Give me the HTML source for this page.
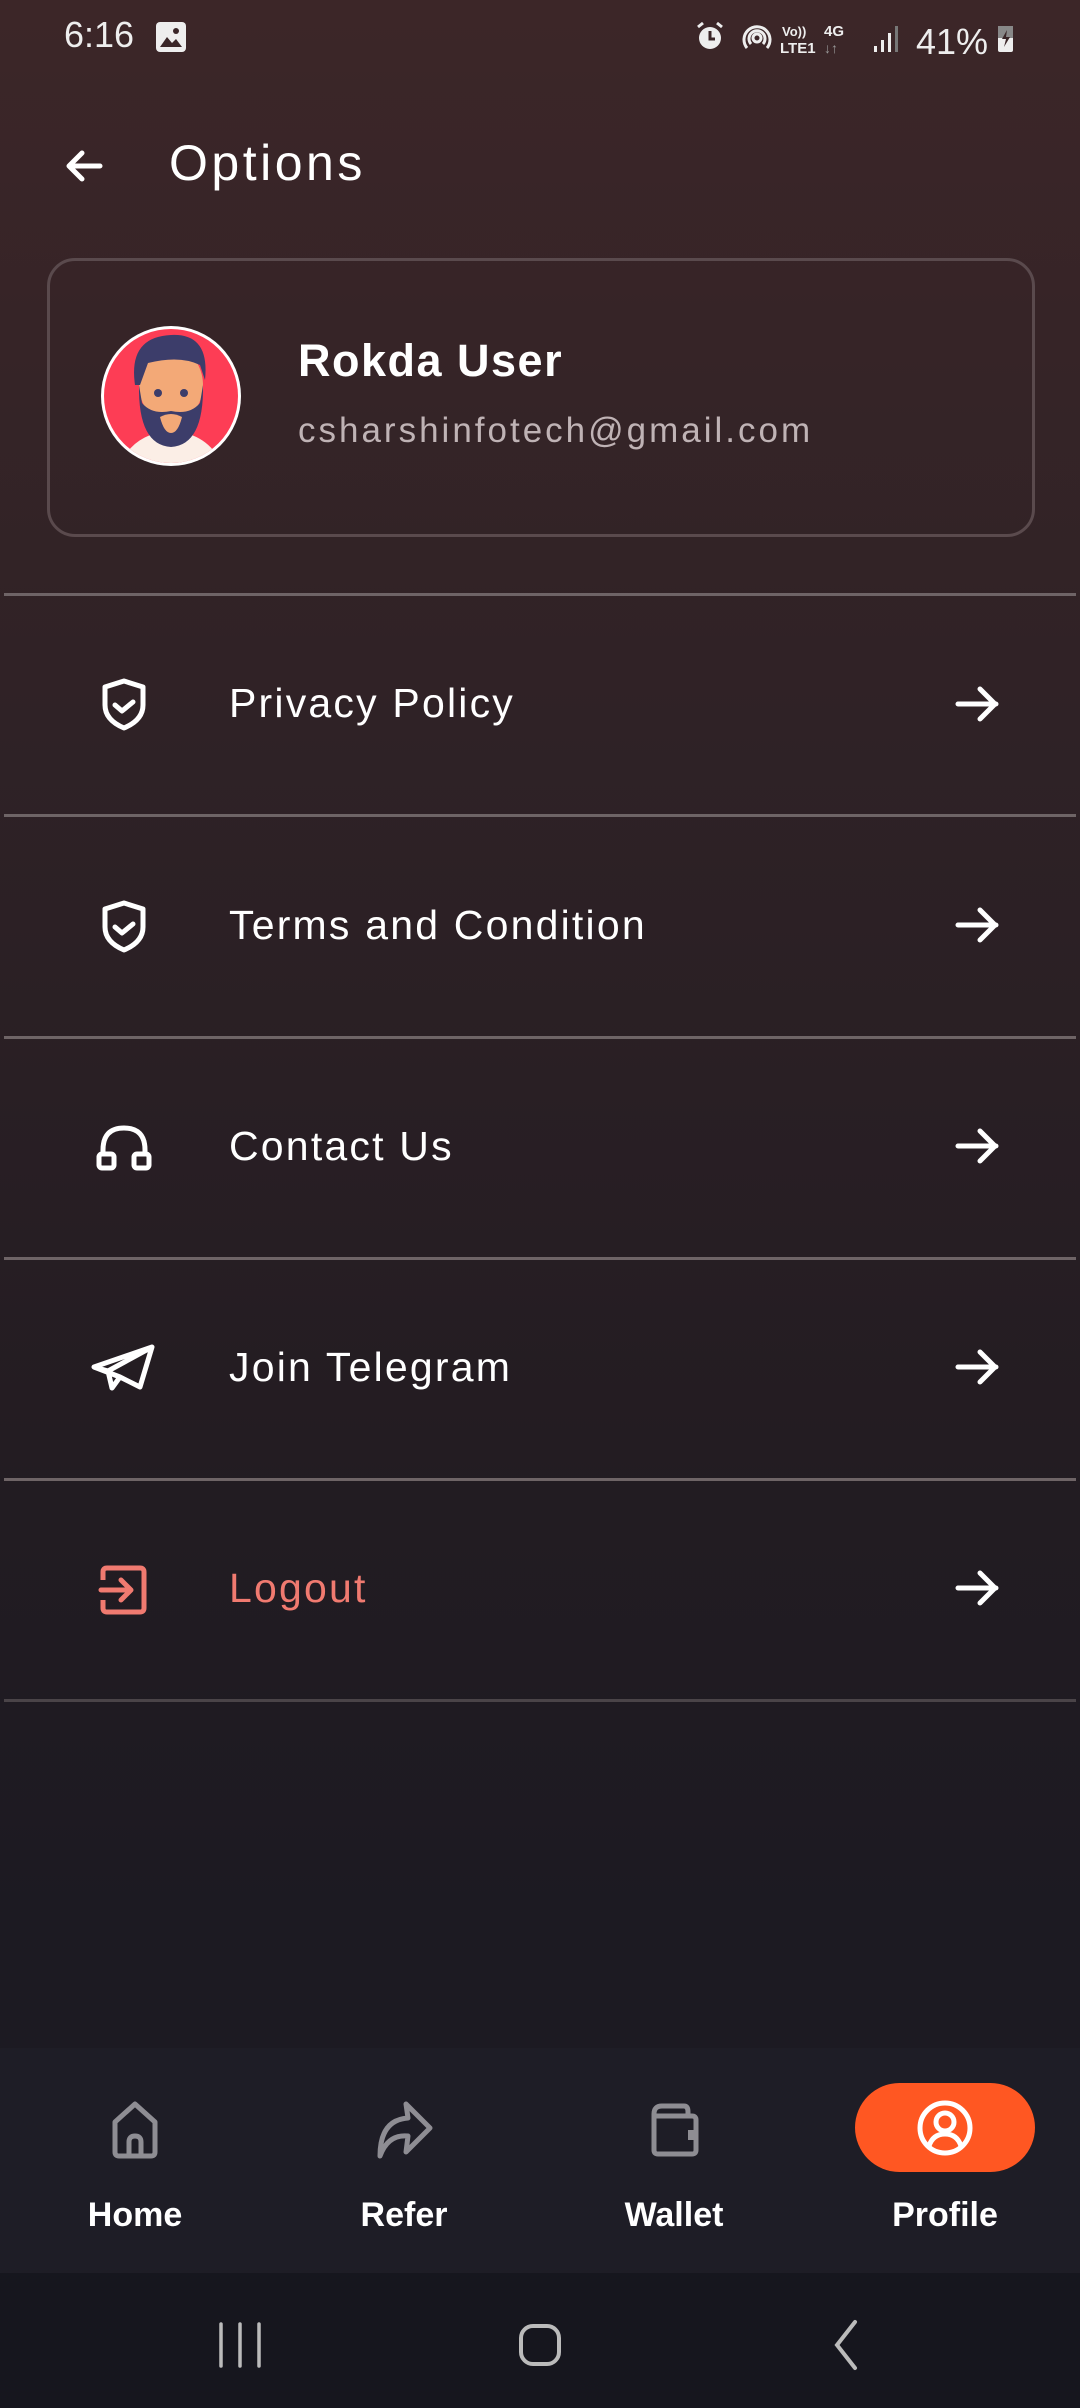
<!DOCTYPE html>
<html><head><meta charset="utf-8"><style>
*{margin:0;padding:0;box-sizing:border-box}
body{width:1080px;height:2408px;overflow:hidden;font-family:"Liberation Sans",sans-serif;color:#fff;position:relative;
background:linear-gradient(180deg,#3c2628 0%,#2f2226 30%,#231c22 60%,#1c1a22 80%,#1a1822 100%);}
.abs{position:absolute}
.div{position:absolute;left:4px;width:1072px;height:3px;background:#6e6466}
.row{position:absolute;left:0;width:1080px;height:100px}
.row .t{position:absolute;left:229px;top:28px;font-size:41px;line-height:44px;letter-spacing:2.2px}
.row svg{position:absolute}
</style></head><body>
<!-- status bar -->
<div class="abs" style="left:64px;top:14px;font-size:36px;color:#eee">6:16</div>
<svg class="abs" style="left:154px;top:20px" width="34" height="34" viewBox="0 0 34 34"><rect x="2" y="2" width="30" height="30" rx="4" fill="#eee"/><path d="M6 27 L13 17 L18 23 L22 19 L28 27Z" fill="#3a2628"/><circle cx="22" cy="11" r="3" fill="#3a2628"/></svg>
<svg class="abs" style="left:694px;top:20px" width="330" height="40" viewBox="0 0 330 40">
<circle cx="16" cy="18" r="11" fill="#eee"/><path d="M16 11v8h5" stroke="#3a2628" stroke-width="3" fill="none"/><path d="M4 7l5-4M28 7l-5-4" stroke="#eee" stroke-width="3"/>
<circle cx="63" cy="18" r="4" fill="none" stroke="#eee" stroke-width="3"/><path d="M53 28a13 13 0 1 1 20 0M57 24a8 8 0 1 1 12 0" stroke="#eee" stroke-width="3" fill="none"/>
<text x="88" y="16" font-size="13" fill="#eee" font-family="Liberation Sans" font-weight="bold">Vo))</text>
<text x="86" y="33" font-size="15" fill="#eee" font-family="Liberation Sans" font-weight="bold">LTE1</text>
<text x="130" y="16" font-size="15" fill="#eee" font-family="Liberation Sans" font-weight="bold">4G</text>
<text x="130" y="33" font-size="14" fill="#999" font-family="Liberation Sans">↓↑</text>
<rect x="180" y="26" width="3" height="6" fill="#eee"/><rect x="187" y="20" width="3" height="12" fill="#eee"/><rect x="194" y="13" width="3" height="19" fill="#eee"/><rect x="201" y="6" width="3" height="26" fill="#777"/>
<text x="222" y="34" font-size="36" fill="#eee" font-family="Liberation Sans">41%</text>
<rect x="304" y="6" width="15" height="26" rx="2" fill="#eee"/><rect x="304" y="6" width="15" height="12" fill="#888"/><path d="M313 10l-5 9h4l-2 8 6-10h-4z" fill="#3a2628"/>
</svg>
<!-- header -->
<svg class="abs" style="left:64px;top:148px" width="40" height="36" viewBox="0 0 40 36"><path d="M36 18H6M18 5L5 18l13 13" stroke="#fff" stroke-width="5" fill="none" stroke-linecap="round" stroke-linejoin="round"/></svg>
<div class="abs" style="left:169px;top:134px;font-size:50px;letter-spacing:3.5px">Options</div>
<!-- card -->
<div class="abs" style="left:47px;top:258px;width:988px;height:279px;border:3px solid #5a4a4d;border-radius:28px"></div>
<svg class="abs" style="left:100px;top:325px" width="142" height="142" viewBox="0 0 142 142">
<defs><clipPath id="c"><circle cx="71" cy="71" r="67"/></clipPath></defs>
<circle cx="71" cy="71" r="70" fill="#fff"/>
<g clip-path="url(#c)"><rect width="142" height="142" fill="#fd3d55"/>
<path d="M20 142 Q30 110 71 105 Q112 110 122 142Z" fill="#fbeee6"/>
<rect x="55" y="85" width="32" height="30" fill="#eaa070"/>
<ellipse cx="71" cy="60" rx="32" ry="38" fill="#f3a977"/>
<path d="M39 60 Q38 120 71 122 Q104 120 103 60 L100 78 Q90 90 71 86 Q52 90 42 78Z" fill="#3c3d6a"/>
<path d="M60 92 Q71 86 82 92 Q78 108 71 108 Q64 108 60 92Z" fill="#f3a977"/>
<path d="M35 60 Q28 12 71 10 Q110 8 105 55 L100 40 Q80 30 48 38 L40 60Z" fill="#3c3d6a"/>
<circle cx="58" cy="68" r="4" fill="#3c3d6a"/><circle cx="84" cy="68" r="4" fill="#3c3d6a"/>
</g></svg>
<div class="abs" style="left:298px;top:335px;font-size:45px;font-weight:bold;letter-spacing:1.5px">Rokda User</div>
<div class="abs" style="left:298px;top:411px;font-size:35px;color:#bfb3b5;letter-spacing:3px">csharshinfotech@gmail.com</div>
<!-- dividers -->
<div class="div" style="top:593px"></div>
<div class="div" style="top:814px"></div>
<div class="div" style="top:1036px"></div>
<div class="div" style="top:1257px"></div>
<div class="div" style="top:1478px"></div>
<div class="div" style="top:1699px;background:#4a4448"></div>
<!-- rows -->
<div class="row" style="top:653px">
<svg style="left:98px;top:24px" width="52" height="56" viewBox="0 0 52 56"><path d="M26 4 L45 10 V28 Q45 43 26 51 Q7 43 7 28 V10Z" stroke="#fff" stroke-width="5" fill="none" stroke-linejoin="round"/><path d="M17 28l7 6 11-9" stroke="#fff" stroke-width="5" fill="none" stroke-linecap="round" stroke-linejoin="round"/></svg>
<div class="t">Privacy Policy</div></div>
<div class="row" style="top:875px">
<svg style="left:98px;top:24px" width="52" height="56" viewBox="0 0 52 56"><path d="M26 4 L45 10 V28 Q45 43 26 51 Q7 43 7 28 V10Z" stroke="#fff" stroke-width="5" fill="none" stroke-linejoin="round"/><path d="M17 28l7 6 11-9" stroke="#fff" stroke-width="5" fill="none" stroke-linecap="round" stroke-linejoin="round"/></svg>
<div class="t">Terms and Condition</div></div>
<div class="row" style="top:1096px">
<svg style="left:94px;top:26px" width="60" height="52" viewBox="0 0 60 52"><path d="M9 34 V28 Q9 6 30 6 Q51 6 51 28 V34" stroke="#fff" stroke-width="5" fill="none"/><rect x="5" y="32" width="15" height="14" rx="3" stroke="#fff" stroke-width="5" fill="none"/><rect x="40" y="32" width="15" height="14" rx="3" stroke="#fff" stroke-width="5" fill="none"/></svg>
<div class="t">Contact Us</div></div>
<div class="row" style="top:1317px">
<svg style="left:90px;top:26px" width="68" height="52" viewBox="0 0 68 52"><path d="M4 24 L62 4 L50 44 L30 34Z M30 34 L22 45 L18 28 M18 28 L62 4" stroke="#fff" stroke-width="5" fill="none" stroke-linejoin="round" stroke-linecap="round"/><path d="M4 24 L18 28" stroke="#fff" stroke-width="5"/></svg>
<div class="t">Join Telegram</div></div>
<div class="row" style="top:1538px">
<svg style="left:98px;top:24px" width="52" height="56" viewBox="0 0 52 56"><path d="M5 18 V10 Q5 6 9 6 H42 Q46 6 46 10 V46 Q46 50 42 50 H9 Q5 50 5 46 V38" stroke="#f07a70" stroke-width="5" fill="none"/><path d="M3 28 H33 M23 18 L33 28 L23 38" stroke="#f07a70" stroke-width="5" fill="none" stroke-linecap="round" stroke-linejoin="round"/></svg>
<div class="t" style="color:#f07a70">Logout</div></div>
<!-- arrows -->
<svg class="abs" style="left:952px;top:682px" width="52" height="44" viewBox="0 0 52 44"><path d="M6 22H44M28 7l15 15-15 15" stroke="#fff" stroke-width="5" fill="none" stroke-linecap="round" stroke-linejoin="round"/></svg>
<svg class="abs" style="left:952px;top:903px" width="52" height="44" viewBox="0 0 52 44"><path d="M6 22H44M28 7l15 15-15 15" stroke="#fff" stroke-width="5" fill="none" stroke-linecap="round" stroke-linejoin="round"/></svg>
<svg class="abs" style="left:952px;top:1124px" width="52" height="44" viewBox="0 0 52 44"><path d="M6 22H44M28 7l15 15-15 15" stroke="#fff" stroke-width="5" fill="none" stroke-linecap="round" stroke-linejoin="round"/></svg>
<svg class="abs" style="left:952px;top:1345px" width="52" height="44" viewBox="0 0 52 44"><path d="M6 22H44M28 7l15 15-15 15" stroke="#fff" stroke-width="5" fill="none" stroke-linecap="round" stroke-linejoin="round"/></svg>
<svg class="abs" style="left:952px;top:1566px" width="52" height="44" viewBox="0 0 52 44"><path d="M6 22H44M28 7l15 15-15 15" stroke="#fff" stroke-width="5" fill="none" stroke-linecap="round" stroke-linejoin="round"/></svg>
<!-- bottom nav -->
<div class="abs" style="left:0;top:2048px;width:1080px;height:225px;background:#1e1d26"></div>
<div class="abs" style="left:0;top:2273px;width:1080px;height:135px;background:#16161e"></div>
<svg class="abs" style="left:105px;top:2100px" width="60" height="60" viewBox="0 0 60 60"><path d="M10 52 V22 L30 4 L50 22 V52 Q50 56 46 56 H14 Q10 56 10 52Z M24 56 V42 Q24 36 30 36 Q36 36 36 42 V56" stroke="#8e8d93" stroke-width="5" fill="none" stroke-linejoin="round"/></svg>
<svg class="abs" style="left:374px;top:2100px" width="60" height="60" viewBox="0 0 60 60"><path d="M32 4 L56 28 L32 52 L34 36 Q14 34 6 56 Q6 20 34 18Z" stroke="#8e8d93" stroke-width="5" fill="none" stroke-linejoin="round"/></svg>
<svg class="abs" style="left:644px;top:2100px" width="60" height="60" viewBox="0 0 60 60"><path d="M10 14 Q10 6 18 6 H40 Q44 6 44 12 V16 M10 14 V50 Q10 54 14 54 H48 Q52 54 52 50 V20 Q52 16 48 16 H10" stroke="#8e8d93" stroke-width="5" fill="none" stroke-linejoin="round"/><rect x="44" y="30" width="9" height="10" fill="#8e8d93"/></svg>
<div class="abs" style="left:855px;top:2083px;width:180px;height:89px;background:#ff5722;border-radius:45px"></div>
<svg class="abs" style="left:915px;top:2098px" width="60" height="60" viewBox="0 0 60 60"><circle cx="30" cy="30" r="25" stroke="#fff" stroke-width="5" fill="none"/><circle cx="30" cy="24" r="9" stroke="#fff" stroke-width="5" fill="none"/><path d="M14 48 Q18 36 30 36 Q42 36 46 48" stroke="#fff" stroke-width="5" fill="none"/></svg>
<div class="abs" style="left:35px;top:2196px;width:200px;text-align:center;font-size:34px;font-weight:bold">Home</div>
<div class="abs" style="left:304px;top:2196px;width:200px;text-align:center;font-size:34px;font-weight:bold">Refer</div>
<div class="abs" style="left:574px;top:2196px;width:200px;text-align:center;font-size:34px;font-weight:bold">Wallet</div>
<div class="abs" style="left:845px;top:2196px;width:200px;text-align:center;font-size:34px;font-weight:bold">Profile</div>
<!-- system nav -->
<svg class="abs" style="left:210px;top:2320px" width="70" height="50" viewBox="0 0 70 50"><path d="M11 4V46M30 4V46M49 4V46" stroke="#bbb" stroke-width="3.5" stroke-linecap="round"/></svg>
<svg class="abs" style="left:515px;top:2320px" width="50" height="50" viewBox="0 0 50 50"><rect x="6" y="6" width="38" height="38" rx="12" stroke="#bbb" stroke-width="4" fill="none"/></svg>
<svg class="abs" style="left:825px;top:2318px" width="40" height="54" viewBox="0 0 40 54"><path d="M30 4 L12 27 L30 50" stroke="#bbb" stroke-width="4" fill="none" stroke-linecap="round"/></svg>
</body></html>
